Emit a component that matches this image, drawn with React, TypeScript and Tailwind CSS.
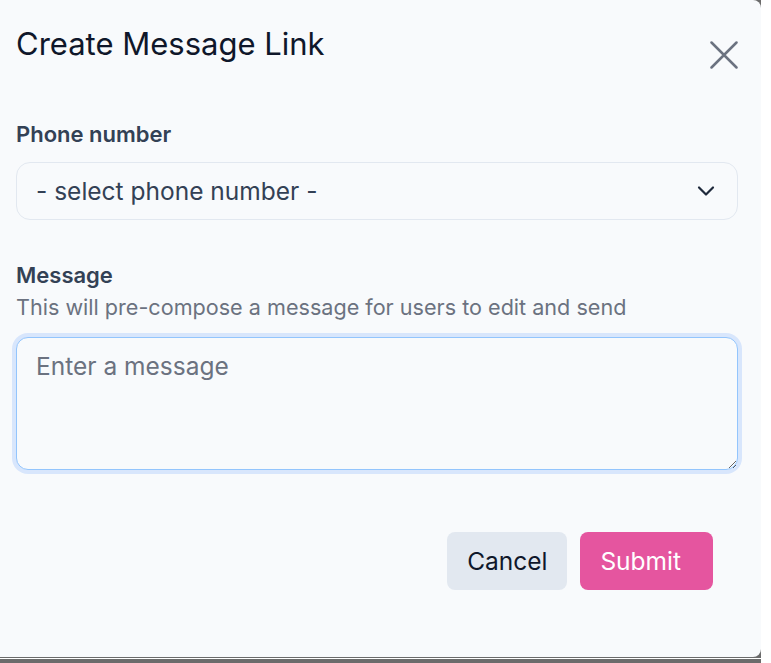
import { useState } from "react";

export default function App() {
  const [phone, setPhone] = useState("");
  const [message, setMessage] = useState("");

  return (
    <div className="w-[771px] h-[663px] bg-white font-['Inter',sans-serif]">
      <div className="w-[761px] h-[658px] bg-[#6b6b6b]">
        <div className="h-[657px] bg-[#f8fafc] rounded-r-[8px] pl-4 pr-[23px] flex flex-col">
          {/* Header */}
          <div className="flex items-start justify-between pt-[26px]">
            <h2 className="text-[31px] leading-[36px] text-[#0f172a]">Create Message Link</h2>
            <button className="mt-[15px] text-[#6b7280]" aria-label="Close">
              <svg width="28" height="28" viewBox="0 0 28 28" fill="none" stroke="currentColor" strokeWidth="2.5" strokeLinecap="round">
                <path d="M1.5 1.5L26.5 26.5M26.5 1.5L1.5 26.5" />
              </svg>
            </button>
          </div>

          {/* Phone number */}
          <label className="mt-[51px] text-[22px] leading-[28px] font-semibold text-[#334155]">Phone number</label>
          <div className="relative mt-[14px]">
            <select
              value={phone}
              onChange={(e) => setPhone(e.target.value)}
              className="w-full h-[58px] appearance-none rounded-[14px] border border-[#e2e8f0] bg-[#f8fafc] pl-[19px] pr-10 text-[24.5px] text-[#334155] outline-none"
            >
              <option value="">- select phone number -</option>
            </select>
            <svg
              className="pointer-events-none absolute right-[23px] top-[23px] text-[#1e293b]"
              width="18"
              height="12"
              viewBox="0 0 18 12"
              fill="none"
              stroke="currentColor"
              strokeWidth="2.2"
              strokeLinecap="round"
              strokeLinejoin="round"
            >
              <path d="M2 2.5l7 7 7-7" />
            </svg>
          </div>

          {/* Message */}
          <label className="mt-[41px] text-[22px] leading-[28px] font-semibold text-[#334155]">Message</label>
          <p className="mt-[4px] text-[21.6px] leading-[28px] text-[#6b7280]">
            This will pre-compose a message for users to edit and send
          </p>
          <textarea
            value={message}
            onChange={(e) => setMessage(e.target.value)}
            placeholder="Enter a message"
            className="mt-[16px] h-[133px] w-full rounded-[12px] border border-[#93c5fd] bg-[#f8fafc] px-[19px] py-[13px] text-[24.5px] leading-[30px] text-[#334155] placeholder:text-[#6b7280] outline-none ring-4 ring-[#d8e6fc]"
          />

          {/* Footer */}
          <div className="mt-[62px] flex justify-end gap-[13px] pr-[25px]">
            <button className="h-[58px] w-[120px] rounded-[8px] bg-[#e2e8f0] text-[24.5px] text-[#0f172a]">Cancel</button>
            <button className="h-[58px] rounded-[8px] bg-[#e5559f] pl-5 pr-8 text-[24.5px] text-white">Submit</button>
          </div>
        </div>
      </div>
      <div className="w-[761px] h-px bg-white" />
      <div className="w-[761px] h-[4px] bg-[#6b6b6b]" />
    </div>
  );
}
